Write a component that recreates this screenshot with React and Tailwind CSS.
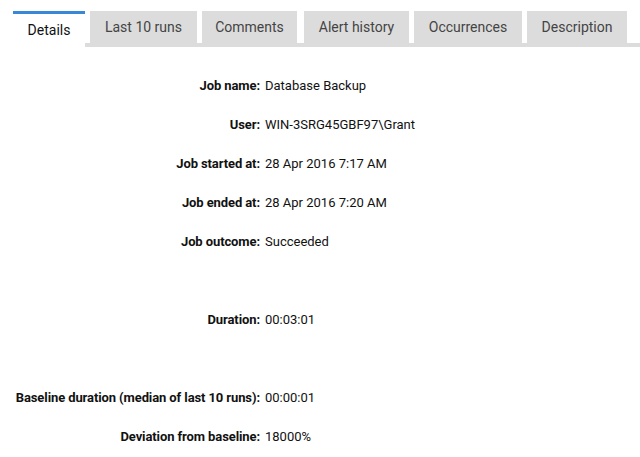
export default function App() {
  const rows = [
    ["Job name", "Database Backup"],
    ["User", "WIN-3SRG45GBF97\\Grant"],
    ["Job started at", "28 Apr 2016 7:17 AM"],
    ["Job ended at", "28 Apr 2016 7:20 AM"],
    ["Job outcome", "Succeeded"],
    null,
    ["Duration", "00:03:01"],
    null,
    ["Baseline duration (median of last 10 runs)", "00:00:01"],
    ["Deviation from baseline", "18000%"],
  ];
  return (
    <div className="w-[640px] h-[457px] bg-white overflow-hidden" style={{ fontFamily: "Roboto, 'Liberation Sans', sans-serif" }}>
      <div className="flex pl-[13px] pt-[11px]">
        <div className="w-[72px] h-[36px] border-t-[3px] border-[#3a87d8] flex items-center justify-center text-[14px] text-[#111]">
          Details
        </div>
        <div className="flex-1 flex border-b-[4px] border-[#dcdcdc]">
          <div className="ml-[5px] w-[107px] h-[32px] pt-[1px] bg-[#dcdcdc] flex items-center justify-center text-[14px] text-[#444]">Last 10 runs</div>
          <div className="ml-[5px] w-[95px] h-[32px] pt-[1px] bg-[#dcdcdc] flex items-center justify-center text-[14px] text-[#444]">Comments</div>
          <div className="ml-[7px] w-[105px] h-[32px] pt-[1px] bg-[#dcdcdc] flex items-center justify-center text-[14px] text-[#444]">Alert history</div>
          <div className="ml-[5px] w-[108px] h-[32px] pt-[1px] bg-[#dcdcdc] flex items-center justify-center text-[14px] text-[#444]">Occurrences</div>
          <div className="ml-[5px] w-[100px] h-[32px] pt-[1px] bg-[#dcdcdc] flex items-center justify-center text-[14px] text-[#444]">Description</div>
        </div>
      </div>
      <div className="mt-[19px] grid grid-cols-[260px_1fr] gap-x-[5px] text-[13px] text-[#111]">
        {rows.map((r, i) =>
          r ? (
            <div key={i} className="contents">
              <div className="h-[39px] flex items-center justify-end font-bold tracking-[-0.1px]">{r[0]}:</div>
              <div className="h-[39px] flex items-center">{r[1]}</div>
            </div>
          ) : (
            <div key={i} className="contents">
              <div className="h-[39px]"></div>
              <div className="h-[39px]"></div>
            </div>
          )
        )}
      </div>
    </div>
  );
}
